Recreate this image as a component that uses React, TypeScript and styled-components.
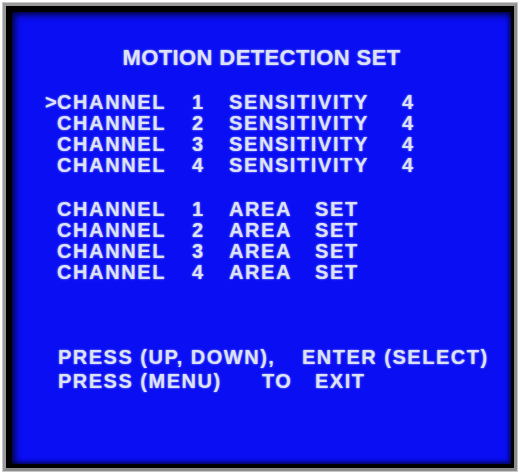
import styled, { createGlobalStyle } from "styled-components";

const GlobalStyle = createGlobalStyle`
  html, body {
    margin: 0;
    padding: 0;
    background: #ffffff;
  }
`;

type Cell = { text: string; w?: number };

const sensitivityRows: Cell[][] = [1, 2, 3, 4].map((n) => [
  { text: "CHANNEL", w: 135 },
  { text: String(n), w: 37 },
  { text: "SENSITIVITY", w: 173 },
  { text: "4" },
]);

const areaRows: Cell[][] = [1, 2, 3, 4].map((n) => [
  { text: "CHANNEL", w: 135 },
  { text: String(n), w: 37 },
  { text: "AREA", w: 86 },
  { text: "SET" },
]);

const helpLines: Cell[][] = [
  [{ text: "PRESS (UP, DOWN),", w: 244 }, { text: "ENTER (SELECT)" }],
  [{ text: "PRESS (MENU)", w: 204 }, { text: "TO", w: 53 }, { text: "EXIT" }],
];

const App = () => {
  return (
    <>
      <GlobalStyle />
      <Bezel>
        <Screen>
          <Title>MOTION DETECTION SET</Title>

          <Menu>
            {sensitivityRows.map((row, i) => (
              <Row key={`s${i}`}>
                <Cursor>{i === 0 ? ">" : ""}</Cursor>
                {row.map((c, j) => (
                  <Field key={j} $w={c.w}>
                    {c.text}
                  </Field>
                ))}
              </Row>
            ))}
          </Menu>

          <Menu $top={23}>
            {areaRows.map((row, i) => (
              <Row key={`a${i}`}>
                <Cursor />
                {row.map((c, j) => (
                  <Field key={j} $w={c.w}>
                    {c.text}
                  </Field>
                ))}
              </Row>
            ))}
          </Menu>

          <Help>
            {helpLines.map((line, i) => (
              <HelpLine key={i}>
                {line.map((c, j) => (
                  <Field key={j} $w={c.w}>
                    {c.text}
                  </Field>
                ))}
              </HelpLine>
            ))}
          </Help>
        </Screen>
      </Bezel>
    </>
  );
};

export default App;

const Bezel = styled.div`
  box-sizing: border-box;
  margin: 3px;
  width: 514px;
  height: 468px;
  border: 3px solid #8c8c8c;
  border-top-color: #9a9a9a;
  border-left-color: #9a9a9a;
  background: #000;
  padding: 6px 3px 4px 6px;
  box-shadow: 0 0 0 1px #c8c8c8;
`;

const Screen = styled.div`
  box-sizing: border-box;
  height: 100%;
  background: #0a0ef2;
  box-shadow: inset 3px 3px 6px rgba(0, 0, 0, 0.75),
    inset -2px -2px 4px rgba(0, 0, 0, 0.6);
  padding: 33px 0 0 33px;
  font-family: "Liberation Sans", Arial, sans-serif;
  font-weight: 700;
  color: #dde2f8;
  text-shadow: 0 0 2px rgba(205, 214, 255, 0.85);
  overflow: hidden;
`;

const Title = styled.div`
  margin-left: -33px;
  text-align: center;
  font-size: 22px;
  line-height: 26px;
  letter-spacing: 0.4px;
`;

const Menu = styled.div<{ $top?: number }>`
  display: flex;
  flex-direction: column;
  margin-top: ${(p) => p.$top ?? 21}px;
`;

const Row = styled.div`
  display: flex;
  font-size: 20px;
  line-height: 21px;
  letter-spacing: 1.6px;
  white-space: nowrap;
`;

const Cursor = styled.span`
  width: 12px;
  letter-spacing: 0;
`;

const Field = styled.span<{ $w?: number }>`
  ${(p) => (p.$w ? `width: ${p.$w}px;` : "")}
  white-space: pre;
`;

const Help = styled.div`
  display: flex;
  flex-direction: column;
  margin-top: 62px;
  padding-left: 13px;
`;

const HelpLine = styled.div`
  display: flex;
  font-size: 20px;
  line-height: 24px;
  letter-spacing: 1.5px;
  white-space: nowrap;
`;
